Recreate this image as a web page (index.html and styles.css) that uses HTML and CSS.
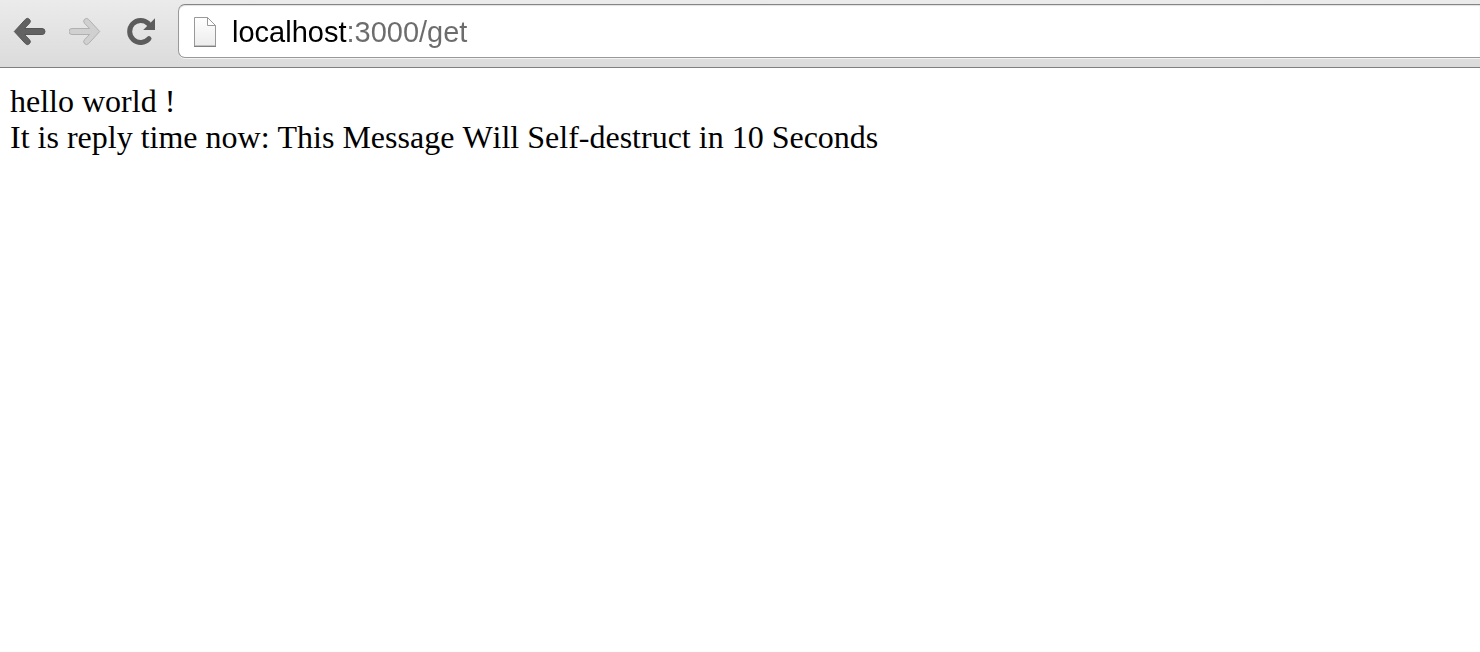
FILE: index.html
```html
<!DOCTYPE html>
<html lang="en">
<head>
<meta charset="utf-8">
<title>localhost:3000/get</title>
<link rel="stylesheet" href="styles.css">
</head>
<body>
<header class="toolbar">
  <nav class="nav" aria-label="Browser navigation">
    <button class="nav-button" type="button" aria-label="Back">
      <svg width="34" height="30" viewBox="0 0 34 30" aria-hidden="true">
        <path class="glyph" d="M1.3 14.5 12.4 2.4a2.8 2.8 0 0 1 4.1 3.9L11.4 11.5h17.6a3 3 0 0 1 0 6H11.4l5.1 5.2a2.8 2.8 0 0 1-4.1 3.9z"/>
      </svg>
    </button>
    <button class="nav-button" type="button" aria-label="Forward" disabled>
      <svg width="34" height="30" viewBox="0 0 34 30" aria-hidden="true">
        <path class="glyph glyph-off" d="M30.7 14.5 19.6 2.4a2.8 2.8 0 0 0-4.1 3.9L20.6 11.5H3a3 3 0 0 0 0 6h17.6l-5.1 5.2a2.8 2.8 0 0 0 4.1 3.9z"/>
      </svg>
    </button>
    <button class="nav-button" type="button" aria-label="Reload">
      <svg width="34" height="30" viewBox="0 0 34 30" aria-hidden="true">
        <path class="arc" d="M23.4 6.6A11 11 0 1 0 24 21.6"/>
        <path class="tip" d="M30 1.2V13H18.2z"/>
      </svg>
    </button>
  </nav>
  <form class="address">
    <svg class="page-icon" width="24" height="32" viewBox="0 0 24 32" aria-hidden="true">
      <defs>
        <linearGradient id="paper" x1="0" y1="0" x2="0" y2="1">
          <stop offset="0" stop-color="#fff"/>
          <stop offset="1" stop-color="#ececec"/>
        </linearGradient>
      </defs>
      <path d="M1.5 1.5h13l8 8v20.5h-21z" fill="url(#paper)" stroke="#999"/>
      <path d="M1 30.5h22" stroke="#808080"/>
      <path d="M14.5 1.5v8h8z" fill="#fff" stroke="#999"/>
    </svg>
    <input class="url" type="text" aria-label="Address" value="localhost:3000/get" spellcheck="false">
  </form>
</header>
<main class="page">
  <p class="line">hello world !</p>
  <p class="line">It is reply time now: This Message Will Self-destruct in 10 Seconds</p>
</main>
</body>
</html>
```
FILE: styles.css
```css
* {
  box-sizing: border-box;
}

body {
  margin: 0;
  background: #fff;
}

.toolbar {
  display: flex;
  padding: 4px 0 9px;
  border-bottom: 1px solid #7f7f7f;
  background: linear-gradient(#ebebeb, #dbdbdb);
}

.nav {
  display: flex;
  align-items: center;
  gap: 22px;
  padding: 2px 19px 0 13px;
}

.nav-button {
  display: flex;
  padding: 0;
  border: 0;
  background: none;
}

.glyph {
  fill: #626262;
  stroke: #555;
}

.glyph-off {
  fill: #d0d0d0;
  stroke: #b0b0b0;
}

.arc {
  fill: none;
  stroke: #5c5c5c;
  stroke-width: 5;
  stroke-linecap: round;
}

.tip {
  fill: #5c5c5c;
}

.address {
  display: flex;
  flex: 1;
  align-items: center;
  gap: 15px;
  height: 54px;
  padding: 2px 0 0 14px;
  border: 1px solid #999;
  border-top-color: #858585;
  border-right: 0;
  border-radius: 7px 0 0 7px;
  background: #fff;
  box-shadow: inset 0 1px 1px #e0e0e0, 0 1px 0 #f3f3f3;
}

.page-icon {
  flex: none;
}

/* The host is drawn black and the rest of the address grey. */
.url {
  flex: 1;
  min-width: 0;
  height: 40px;
  padding: 0;
  border: 0;
  outline: 0;
  background: linear-gradient(90deg, #000 115px, #6c6c6c 115px);
  background-clip: text;
  -webkit-background-clip: text;
  color: transparent;
  caret-color: #000;
  font: 29px "Liberation Sans", Arial, sans-serif;
}

.page {
  padding: 15px 10px;
  color: #000;
  font: 32px/36px "Liberation Serif", "Times New Roman", serif;
  font-kerning: none;
}

.line {
  margin: 0;
}
```
